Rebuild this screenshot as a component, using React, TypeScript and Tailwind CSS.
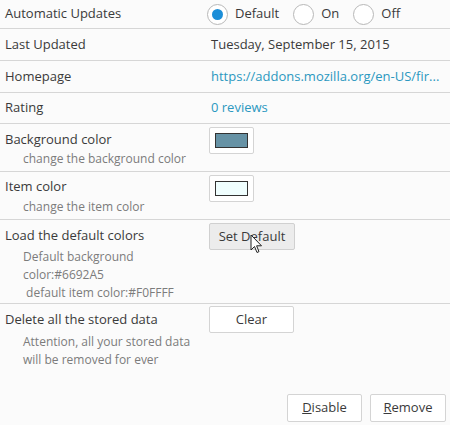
import React from "react";

const Radio = ({ checked, label }: { checked?: boolean; label: string }) => (
  <div className="flex items-center">
    <div className="w-[21px] h-[21px] rounded-full border border-[#b8b8b8] bg-white flex items-center justify-center">
      {checked && <div className="w-[11px] h-[11px] rounded-full bg-[#1b8ed8]" />}
    </div>
    <span className="ml-[7px] mr-[14px]">{label}</span>
  </div>
);

const Row = ({ h, children }: { h: string; children: React.ReactNode }) => (
  <div className={`flex border-b border-[#d6d6d6] ${h}`}>{children}</div>
);

export default function App() {
  return (
    <div
      className="w-[450px] h-[425px] bg-[#fbfbfb] text-[13px] text-[#3a3a3a] overflow-hidden relative"
      style={{ fontFamily: '"Open Sans", "Noto Sans", sans-serif' }}
    >
      <div className="flex items-center h-[29px] border-b border-[#d6d6d6]">
        <div className="w-[207px] pl-[5px]">Automatic Updates</div>
        <Radio checked label="Default" />
        <Radio label="On" />
        <Radio label="Off" />
      </div>
      <div className="flex items-center h-[32px] border-b border-[#d6d6d6]">
        <div className="w-[209px] pl-[5px]">Last Updated</div>
        <div className="pl-[2px]">Tuesday, September 15, 2015</div>
      </div>
      <div className="flex items-center h-[32px] border-b border-[#d6d6d6]">
        <div className="w-[209px] pl-[5px]">Homepage</div>
        <div className="pl-[2px] text-[#2b98c0]">https://addons.mozilla.org/en-US/fir...</div>
      </div>
      <div className="flex items-center h-[31px] border-b border-[#d6d6d6]">
        <div className="w-[209px] pl-[5px]">Rating</div>
        <div className="pl-[2px] text-[#2b98c0]">0 reviews</div>
      </div>
      <Row h="h-[48px]">
        <div className="w-[209px] pl-[5px] pt-[5px] leading-[20px]">
          <div>Background color</div>
          <div className="pl-[18px] text-[12px] text-[#7c7c7c]">change the background color</div>
        </div>
        <div className="pt-[3px]">
          <div className="w-[45px] h-[27px] border border-[#d4d4d4] rounded-[2px] bg-white flex items-center justify-center">
            <div className="w-[33px] h-[15px] border border-[#333] bg-[#6692A5]" />
          </div>
        </div>
      </Row>
      <Row h="h-[48px]">
        <div className="w-[209px] pl-[5px] pt-[4px] leading-[20px]">
          <div>Item color</div>
          <div className="pl-[18px] text-[12px] text-[#7c7c7c] pt-[1px]">change the item color</div>
        </div>
        <div className="pt-[3px]">
          <div className="w-[45px] h-[27px] border border-[#d4d4d4] rounded-[2px] bg-white flex items-center justify-center">
            <div className="w-[33px] h-[15px] border border-[#333] bg-[#F0FFFF]" />
          </div>
        </div>
      </Row>
      <Row h="h-[84px]">
        <div className="w-[209px] pl-[5px] pt-[5px] leading-[20px]">
          <div>Load the default colors</div>
          <div className="pl-[18px] text-[12px] text-[#7c7c7c] leading-[18px] pt-[3px]">
            Default background
            <br />
            color:#6692A5
            <br />
            &nbsp;default item color:#F0FFFF
          </div>
        </div>
        <div className="pt-[3px] relative">
          <div className="w-[86px] h-[27px] border border-[#d0d0d0] rounded-[2px] bg-[#ececec] flex items-center justify-center">
            Set Default
          </div>
          <svg className="absolute left-[41px] top-[14px]" width="13" height="20" viewBox="0 0 13 20">
            <path d="M1 1 L1 16 L4.5 12.5 L7 18.5 L9 17.6 L6.6 11.8 L11.5 11.8 Z" fill="#fff" stroke="#222" strokeWidth="1" strokeLinejoin="round" />
          </svg>
        </div>
      </Row>
      <div className="flex h-[80px]">
        <div className="w-[209px] pl-[5px] pt-[5px] leading-[20px]">
          <div>Delete all the stored data</div>
          <div className="pl-[18px] text-[12px] text-[#7c7c7c] leading-[18px] pt-[4px]">
            Attention, all your stored data
            <br />
            will be removed for ever
          </div>
        </div>
        <div className="pt-[2px]">
          <div className="w-[85px] h-[27px] border border-[#d4d4d4] rounded-[2px] bg-white flex items-center justify-center">
            Clear
          </div>
        </div>
      </div>
      <div className="flex justify-end gap-[8px] pr-[4px] pt-[10px]">
        <div className="w-[75px] h-[28px] border border-[#d4d4d4] rounded-[2px] bg-white flex items-center justify-center">
          <span><span className="underline">D</span>isable</span>
        </div>
        <div className="w-[76px] h-[28px] border border-[#d4d4d4] rounded-[2px] bg-white flex items-center justify-center">
          <span><span className="underline">R</span>emove</span>
        </div>
      </div>
    </div>
  );
}
